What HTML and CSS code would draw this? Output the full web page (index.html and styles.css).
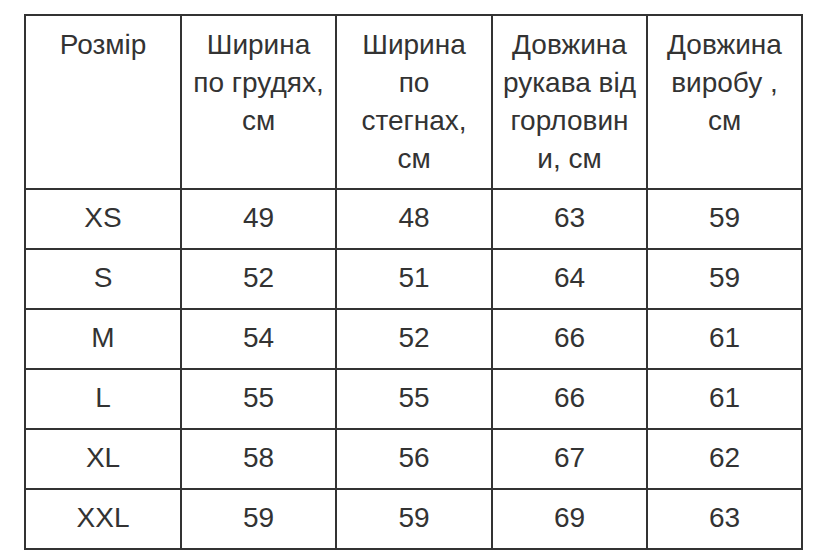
FILE: index.html
```html
<!DOCTYPE html>
<html lang="uk">
<head>
<meta charset="utf-8">
<title>Розмірна сітка</title>
<link rel="stylesheet" href="styles.css">
</head>
<body>
<table class="size-table">
  <colgroup>
    <col class="c1"><col class="c2"><col class="c3"><col class="c4"><col class="c5">
  </colgroup>
  <thead>
    <tr>
      <th>Розмір</th>
      <th>Ширина<br>по грудях,<br>см</th>
      <th>Ширина<br>по<br>стегнах,<br>см</th>
      <th>Довжина<br>рукава від<br>горловин<br>и, см</th>
      <th>Довжина<br>виробу ,<br>см</th>
    </tr>
  </thead>
  <tbody>
    <tr><td>XS</td><td>49</td><td>48</td><td>63</td><td>59</td></tr>
    <tr><td>S</td><td>52</td><td>51</td><td>64</td><td>59</td></tr>
    <tr><td>M</td><td>54</td><td>52</td><td>66</td><td>61</td></tr>
    <tr><td>L</td><td>55</td><td>55</td><td>66</td><td>61</td></tr>
    <tr><td>XL</td><td>58</td><td>56</td><td>67</td><td>62</td></tr>
    <tr><td>XXL</td><td>59</td><td>59</td><td>69</td><td>63</td></tr>
  </tbody>
</table>
</body>
</html>
```
FILE: styles.css
```css
html, body {
  margin: 0;
  padding: 0;
  background: #ffffff;
}

body {
  padding: 14px 0 0 24px;
  font-family: "Liberation Sans", Arial, sans-serif;
  color: #333333;
}

.size-table {
  table-layout: fixed;
  border-collapse: separate;
  border-spacing: 2px;
  background: #333333;
  width: 779px;
}

.c1 { width: 154px; }
.c2 { width: 153px; }
.c3 { width: 154px; }
.c4 { width: 153px; }
.c5 { width: 153px; }

.size-table th,
.size-table td {
  background: #ffffff;
  font-size: 28px;
  text-align: center;
  padding: 0;
  font-weight: normal;
}

.size-table th {
  height: 172px;
  vertical-align: top;
  line-height: 38.3px;
  padding-top: 9.5px;
  box-sizing: border-box;
}

.size-table td {
  height: 58px;
  vertical-align: middle;
  line-height: 32px;
  padding-bottom: 2px;
  box-sizing: border-box;
}
```
